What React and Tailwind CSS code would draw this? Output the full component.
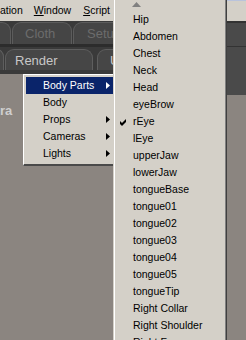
export default function App() {
  const items = [
    "Hip", "Abdomen", "Chest", "Neck", "Head", "eyeBrow", "rEye", "lEye",
    "upperJaw", "lowerJaw", "tongueBase", "tongue01", "tongue02", "tongue03",
    "tongue04", "tongue05", "tongueTip", "Right Collar", "Right Shoulder",
    "Right Forearm",
  ];
  const left = [
    { t: "Body Parts", arrow: true, sel: true },
    { t: "Body", arrow: false },
    { t: "Props", arrow: true },
    { t: "Cameras", arrow: true },
    { t: "Lights", arrow: true },
  ];
  return (
    <div className="relative w-[246px] h-[340px] overflow-hidden flex bg-[#8b8580] font-['Liberation_Sans',Arial,sans-serif]">
      {/* main column */}
      <div className="w-[227px] shrink-0 flex flex-col">
        <div className="h-[21px] bg-[#d4d0c8] flex items-center text-[10.5px] leading-none text-black whitespace-nowrap">
          <span>ation</span>
          <span className="ml-[11px]">
            <span className="underline underline-offset-[1px]">W</span>indow
          </span>
          <span className="ml-[12px]">
            <span className="underline underline-offset-[1px]">S</span>cript
          </span>
        </div>
        <div className="h-[53px] bg-[#3a3a3a] flex flex-col overflow-hidden">
          <div className="h-[23px] flex items-end">
            <div className="h-[22px] w-[22px] ml-[-11px] shrink-0 rounded-t-[9px] border border-b-0 border-[#5c5c5c] bg-[#454545]" />
            <div className="h-[22px] w-[60px] ml-[1px] shrink-0 rounded-t-[9px] border border-b-0 border-[#5c5c5c] bg-[#454545] flex items-center pl-[12px] text-[13px] leading-none text-[#6c6c6c]">
              Cloth
            </div>
            <div className="h-[22px] w-[70px] ml-[1px] shrink-0 rounded-t-[9px] border border-b-0 border-[#5c5c5c] bg-[#454545] flex items-center pl-[13px] text-[13px] leading-none text-[#6c6c6c]">
              Setup
            </div>
          </div>
          <div className="h-[3px] bg-[#2c2c2c]" />
          <div className="h-[27px] flex items-start pt-[2px]">
            <div className="h-[21px] w-[15px] ml-[-11px] shrink-0 rounded-t-[9px] border border-b-0 border-[#5e5e5e] bg-[#464646]" />
            <div className="h-[21px] w-[88px] ml-[1px] shrink-0 rounded-t-[9px] border border-b-0 border-[#5e5e5e] bg-[#464646] flex items-center pl-[9px] text-[13px] leading-none text-[#c8c8c8]">
              Render
            </div>
            <div className="h-[21px] w-[70px] ml-[4px] shrink-0 rounded-t-[9px] border border-b-0 border-[#5e5e5e] bg-[#464646] flex items-center pl-[12px] text-[13px] leading-none text-[#c8c8c8]">
              Utilities
            </div>
          </div>
        </div>
        <div className="pt-[30px] text-[13px] leading-none font-bold text-[#cfcfcf]">ra</div>
      </div>
      {/* right strip */}
      <div className="flex-1 flex flex-col">
        <div className="h-px bg-[#b9c3dc]" />
        <div className="h-[20px] bg-[#d4d0c8]" />
        <div className="h-[2px] bg-[#333333]" />
        <div className="h-[23px] bg-[#4a4a4a]" />
        <div className="h-px bg-[#333333]" />
        <div className="h-[48px] bg-[#4a4a4a]" />
      </div>

      {/* context menu */}
      <div className="absolute left-[23px] top-[74px] w-[92px] bg-[#d4d0c8] border-l border-t border-white border-b-2 border-b-[#4a4a4a] pt-[2px] pl-[2px] pb-[2px] text-[10.5px] leading-none">
        {left.map((it) => (
          <div
            key={it.t}
            className={
              it.sel
                ? "h-[17px] w-[87px] flex items-center justify-between bg-[#0a246a] text-white"
                : "h-[17px] w-[87px] flex items-center justify-between text-black"
            }
          >
            <span className="pl-[17px]">{it.t}</span>
            {it.arrow && (
              <svg width="4" height="7" viewBox="0 0 4 7" className="mr-[3px]">
                <polygon points="0,0 4,3.5 0,7" fill={it.sel ? "#ffffff" : "#000000"} />
              </svg>
            )}
          </div>
        ))}
      </div>

      {/* submenu */}
      <div className="absolute left-[113px] top-0 w-[114px] h-[360px] bg-[#d4d0c8] border-l border-l-[#d4d0c8] border-r border-r-[#404040] shadow-[inset_1px_0_0_#ffffff,inset_-1px_0_0_#808080] text-[10.5px] leading-none text-black">
        <div className="h-[11px] pl-[18px] pt-[2px]">
          <svg width="9" height="5" viewBox="0 0 9 5" className="block">
            <polygon points="0,5 4.5,0 9,5" fill="#808080" />
          </svg>
        </div>
        {items.map((t) => (
          <div key={t} className="h-[17px] flex items-center whitespace-nowrap">
            <div className="w-[19px] shrink-0 pl-[6px] pt-[2px]">
              {t === "rEye" && (
                <svg width="7" height="7" viewBox="0 0 7 7" className="block">
                  <polygon points="0,2 2,4 6,0 6,3 2,7 0,5" fill="#000000" />
                </svg>
              )}
            </div>
            <span>{t}</span>
          </div>
        ))}
      </div>
    </div>
  );
}
